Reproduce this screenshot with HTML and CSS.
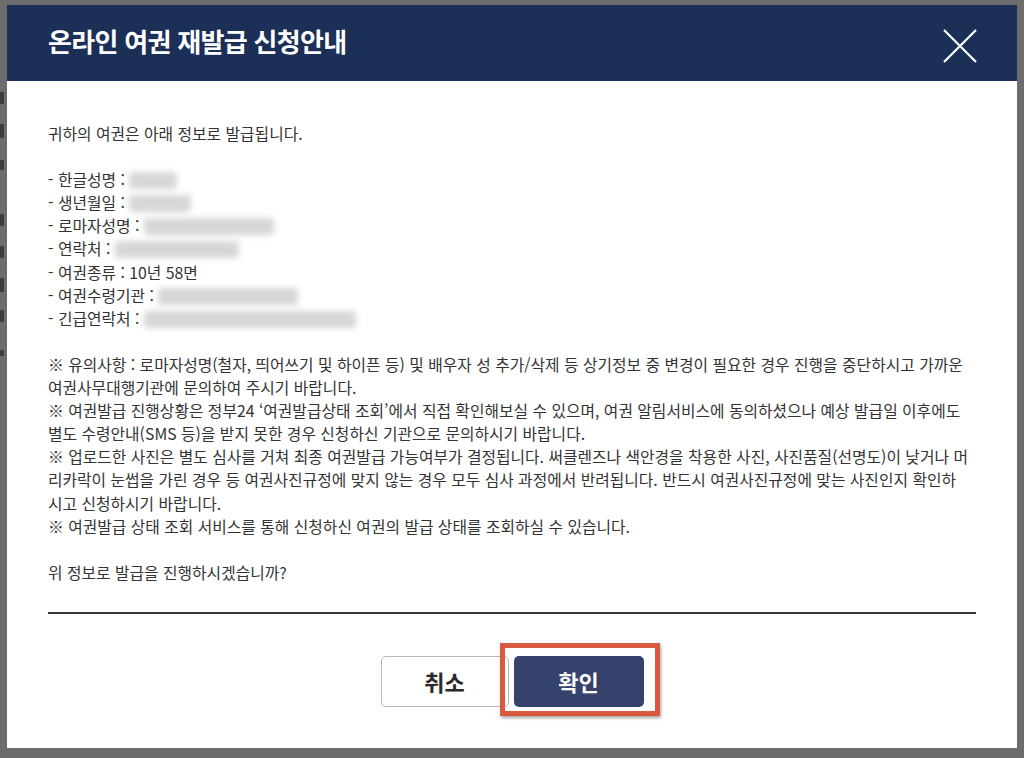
FILE: index.html
```html
<!DOCTYPE html>
<html lang="ko">
<head>
<meta charset="utf-8">
<title>온라인 여권 재발급 신청안내</title>
<link rel="stylesheet" href="styles.css">
</head>
<body>
<div class="backdrop" aria-hidden="true">
  <i class="mark m1"></i><i class="mark m2"></i><i class="mark m3"></i><i class="mark m4"></i>
  <i class="mark m5"></i><i class="mark m6"></i><i class="mark m7"></i><i class="mark m8"></i>
</div>
<div class="overlay">
  <section class="dialog">
    <header class="dialog-header">
      <h1 class="title">온라인 여권 재발급 신청안내</h1>
      <button class="close" aria-label="닫기">
        <svg width="34" height="34" viewBox="0 0 34 34"><path d="M1 1 L33 33 M33 1 L1 33" stroke="#fff" stroke-width="2.2" fill="none"/></svg>
      </button>
    </header>
    <div class="dialog-body">
      <p class="text">귀하의 여권은 아래 정보로 발급됩니다.<br><br>
- 한글성명 : <span class="redact w48"></span><br>
- 생년월일 : <span class="redact w62"></span><br>
- 로마자성명 : <span class="redact w130"></span><br>
- 연락처 : <span class="redact w124"></span><br>
- 여권종류 : 10년 58면<br>
- 여권수령기관 : <span class="redact w140"></span><br>
- 긴급연락처 : <span class="redact w212"></span><br><br>
※ 유의사항 : 로마자성명(철자, 띄어쓰기 및 하이픈 등) 및 배우자 성 추가/삭제 등 상기정보 중 변경이 필요한 경우 진행을 중단하시고 가까운<br>여권사무대행기관에 문의하여 주시기 바랍니다.<br>
※ 여권발급 진행상황은 정부24 ‘여권발급상태 조회’에서 직접 확인해보실 수 있으며, 여권 알림서비스에 동의하셨으나 예상 발급일 이후에도<br>별도 수령안내(SMS 등)을 받지 못한 경우 신청하신 기관으로 문의하시기 바랍니다.<br>
※ 업로드한 사진은 별도 심사를 거쳐 최종 여권발급 가능여부가 결정됩니다. 써클렌즈나 색안경을 착용한 사진, 사진품질(선명도)이 낮거나 머<br>리카락이 눈썹을 가린 경우 등 여권사진규정에 맞지 않는 경우 모두 심사 과정에서 반려됩니다. 반드시 여권사진규정에 맞는 사진인지 확인하<br>시고 신청하시기 바랍니다.<br>
※ 여권발급 상태 조회 서비스를 통해 신청하신 여권의 발급 상태를 조회하실 수 있습니다.<br><br>
위 정보로 발급을 진행하시겠습니까?</p>
      <div class="divider"></div>
      <div class="actions">
        <button class="btn btn-cancel">취소</button>
        <span class="highlight"><button class="btn btn-ok">확인</button></span>
      </div>
    </div>
  </section>
</div>
</body>
</html>
```
FILE: styles.css
```css
html, body {
  margin: 0;
  padding: 0;
}
body {
  width: 1024px;
  height: 758px;
  overflow: hidden;
  position: relative;
  background: #6c6c6c;
  font-family: "Noto Sans CJK KR", "Noto Sans", sans-serif;
}
.backdrop {
  position: absolute;
  left: 0;
  top: 0;
  width: 7px;
  height: 758px;
}
.mark {
  position: absolute;
  left: 0;
  width: 4px;
  background: #3c3c3c;
  border-radius: 1px;
}
.m1 { top: 92px; height: 12px; }
.m2 { top: 124px; height: 14px; }
.m3 { top: 160px; height: 10px; }
.m4 { top: 214px; height: 12px; }
.m5 { top: 246px; height: 12px; }
.m6 { top: 278px; height: 14px; }
.m7 { top: 310px; height: 12px; }
.m8 { top: 350px; height: 6px; }
.overlay {
  position: relative;
  padding: 5px 0 0 7px;
}
.dialog {
  width: 1010px;
  height: 743px;
  background: #fff;
  display: flex;
  flex-direction: column;
}
.dialog-header {
  height: 76px;
  background: #1b2f57;
  display: flex;
  align-items: center;
  justify-content: space-between;
  padding: 0 40px 0 41px;
  flex-shrink: 0;
}
.title {
  margin: 0;
  color: #fff;
  font-size: 26px;
  font-weight: 700;
  letter-spacing: -0.7px;
  padding-bottom: 6px;
}
.close {
  border: 0;
  padding: 0;
  margin: 6px 0 0;
  background: none;
  width: 34px;
  height: 34px;
  display: flex;
}
.dialog-body {
  padding: 41px 41px 0;
}
.text {
  margin: 0;
  font-size: 15.8px;
  line-height: 23.1px;
  color: #333;
  white-space: nowrap;
}
.redact {
  display: inline-block;
  height: 17px;
  vertical-align: -3px;
  background: #d6d6d6;
  filter: blur(3px);
  border-radius: 3px;
}
.w48 { width: 48px; }
.w62 { width: 62px; }
.w130 { width: 130px; }
.w124 { width: 124px; }
.w140 { width: 140px; }
.w212 { width: 212px; }
.divider {
  margin-top: 28px;
  border-top: 2px solid #3a3a3a;
}
.actions {
  display: flex;
  justify-content: center;
  gap: 5px;
  margin-top: 42px;
}
.btn {
  width: 128px;
  height: 51px;
  border-radius: 5px;
  font-family: inherit;
  font-size: 22px;
  font-weight: 700;
  padding: 0;
}
.btn-cancel {
  background: #fff;
  border: 1px solid #b8b8b8;
  color: #2a2a2a;
}
.btn-ok {
  width: 130px;
  background: #34426c;
  border: 0;
  color: #fff;
}
.highlight {
  position: relative;
  display: flex;
}
.highlight::after {
  content: "";
  position: absolute;
  left: -14px;
  right: -16px;
  top: -13px;
  bottom: -9px;
  border: 5px solid #d95a3f;
  box-shadow: 1px 2px 3px rgba(0,0,0,0.35);
  pointer-events: none;
}
```
